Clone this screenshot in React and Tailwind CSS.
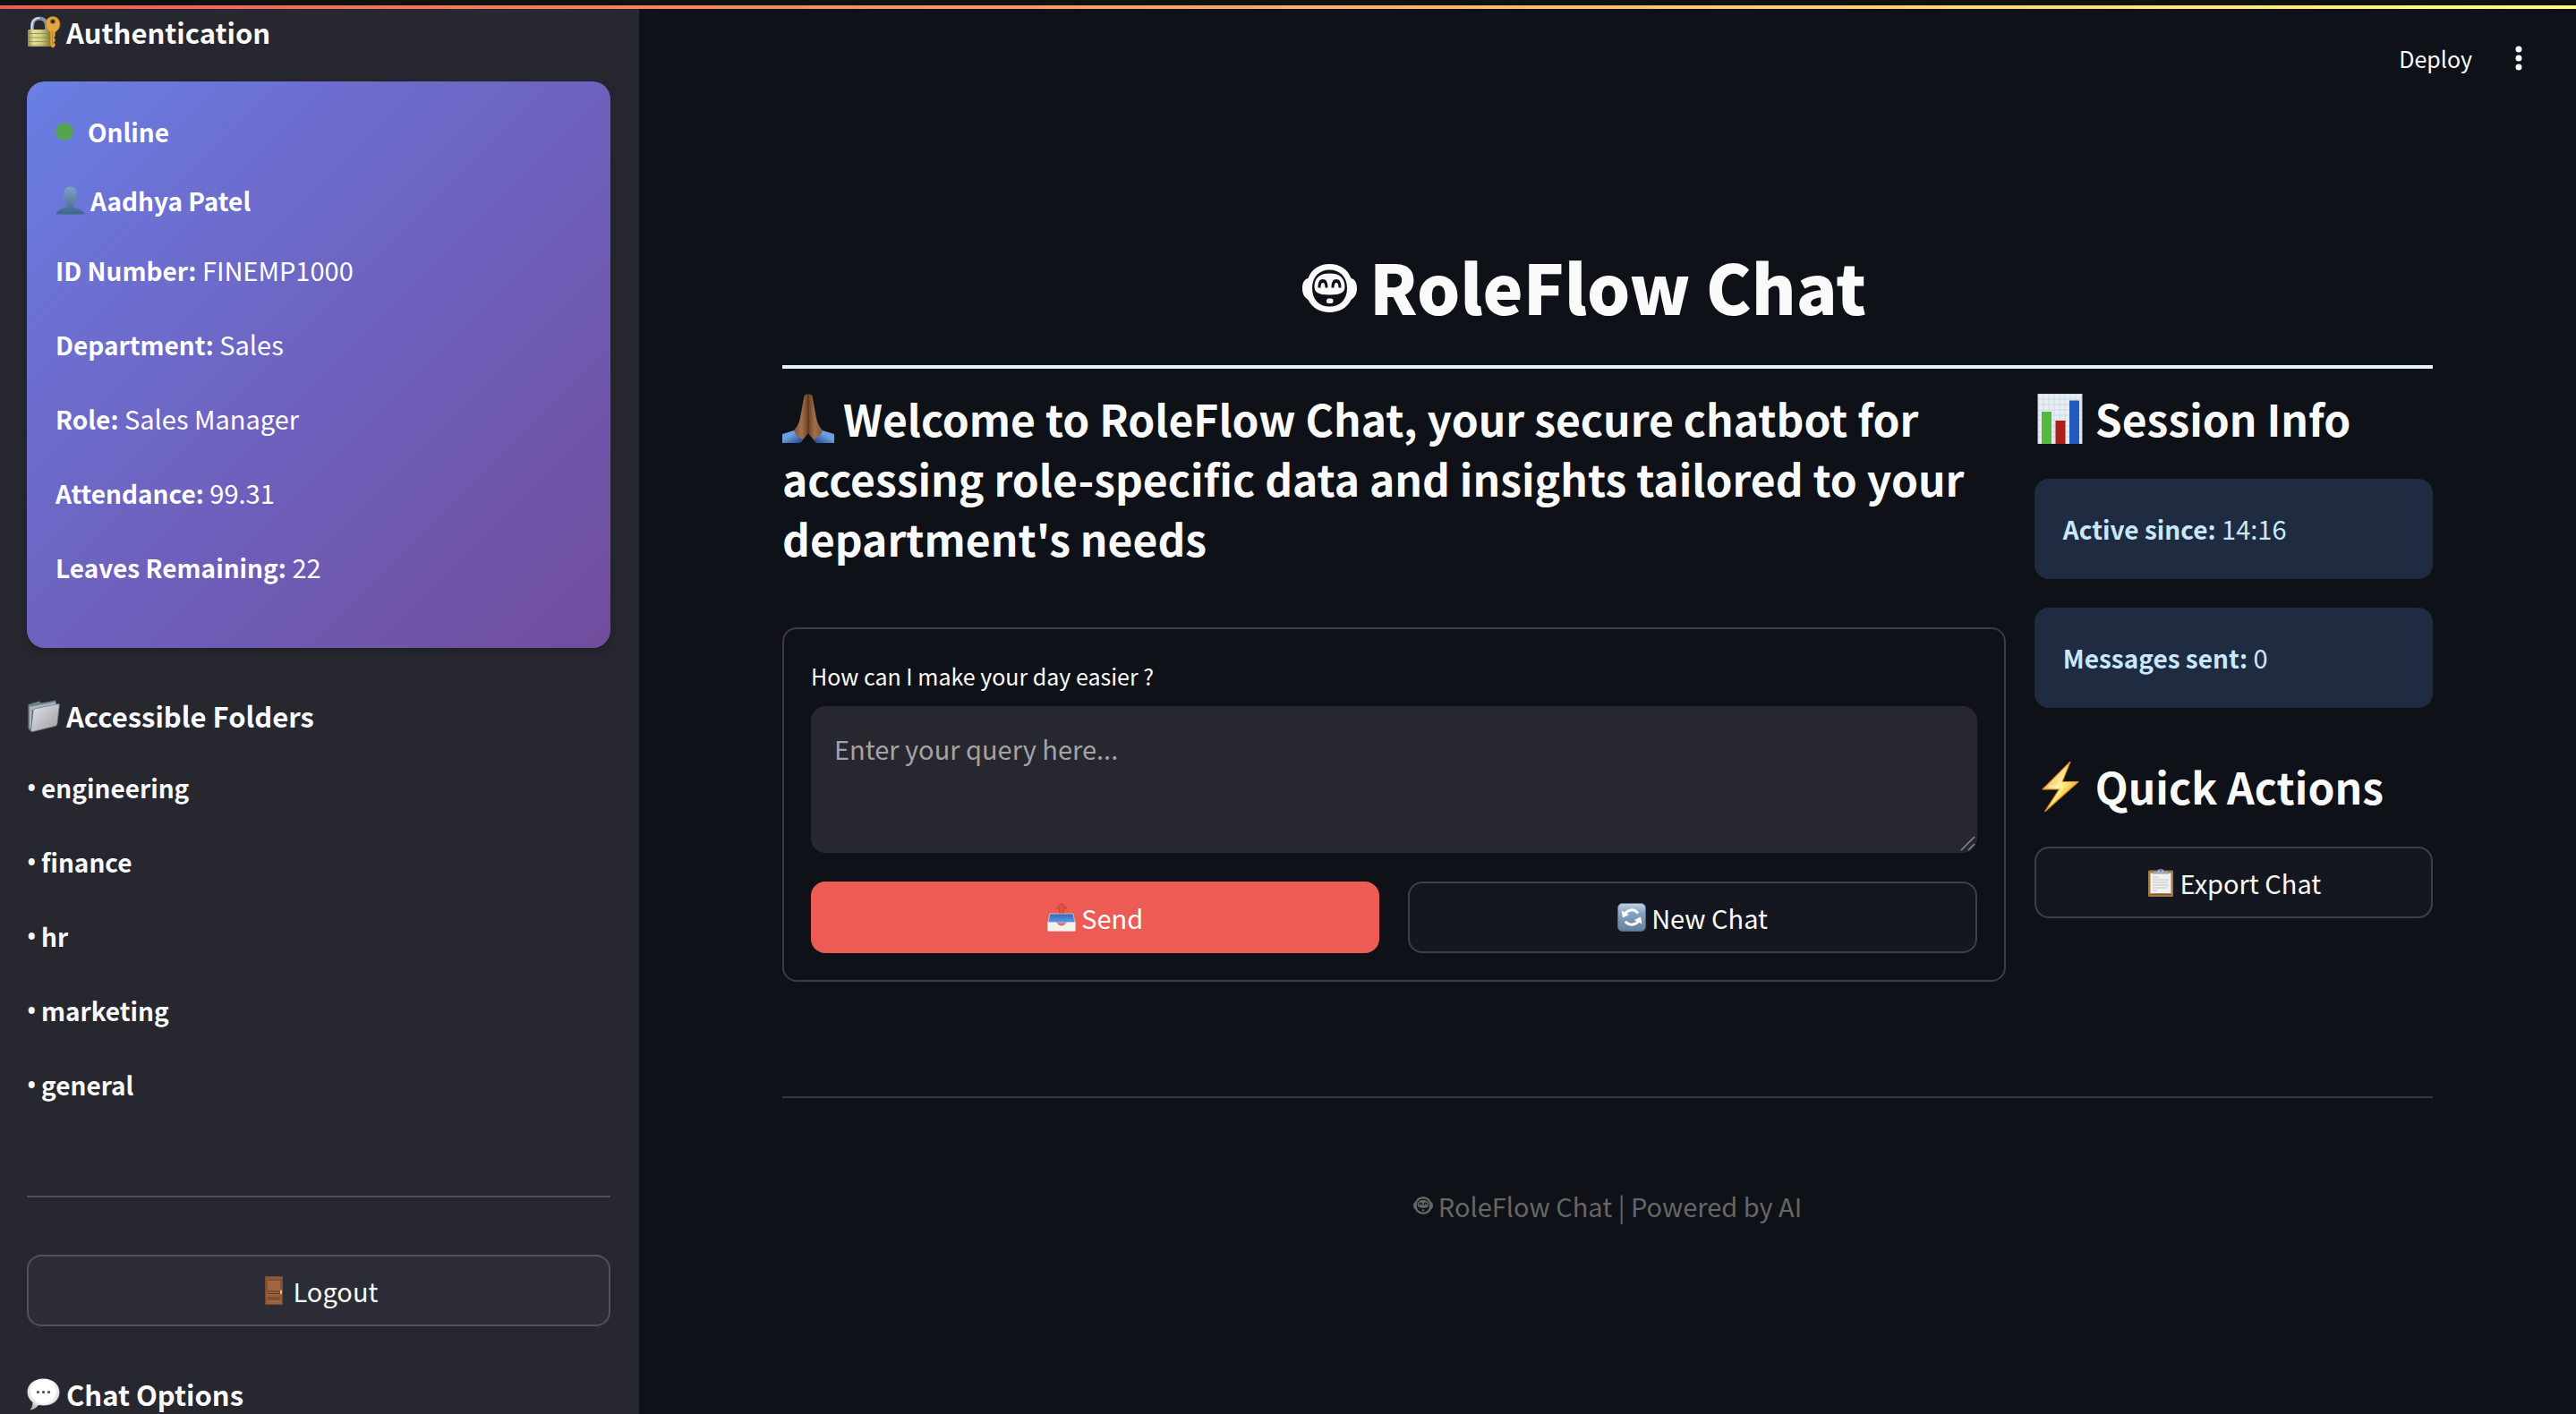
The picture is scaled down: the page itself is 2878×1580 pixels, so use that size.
import React from "react";

/* ---------- icons ---------- */

function RobotFace({ className }) {
  return (
    <svg viewBox="0 0 61 54" className={className} fill="none" aria-hidden="true">
      <path
        fill="currentColor"
        fillRule="evenodd"
        d="M30.500 0C19 0 10 6 6.500 16C2 17 0 21.500 0 27C0 33 2 37 6.500 40C11 49 20 54 30.500 54C41 54 50 49 54.500 40C59 37 61 33 61 27C61 21.500 59 17 54.500 16C51 6 42 0 30.500 0ZM30.500 6.500C42 6.500 50 14.500 50 27C50 40 42 47.500 30.500 47.500C19 47.500 11 40 11 27C11 14.500 19 6.500 30.500 6.500Z"
      />
      <path
        fill="currentColor"
        fillRule="evenodd"
        d="M30.500 10.500C20 10.500 13.500 15 13.500 25.500C13.500 31.500 18 34.500 30.500 34.500C43 34.500 47.500 31.500 47.500 25.500C47.500 15 41 10.500 30.500 10.500ZM17.500 26.500C17.500 20 19.500 17 23 17C26.500 17 28.500 20 28.500 26.500H25.500C25.500 23 24.800 21 23 21C21.200 21 20.500 23 20.500 26.500ZM32.500 26.500C32.500 20 34.500 17 38 17C41.500 17 43.500 20 43.500 26.500H40.500C40.500 23 39.800 21 38 21C36.200 21 35.500 23 35.500 26.500Z"
      />
      <rect x="27" y="38.500" width="7.500" height="5.500" rx="2.500" fill="currentColor" />
    </svg>
  );
}

function LockKey({ className }) {
  return (
    <svg viewBox="0 0 38 36" className={className} aria-hidden="true">
      <defs>
        <linearGradient id="lock-body" x1="0" x2="1" y1="0" y2="0">
          <stop offset="0" stopColor="#8f8a4c" />
          <stop offset="0.25" stopColor="#e6e09a" />
          <stop offset="0.6" stopColor="#cfc77c" />
          <stop offset="1" stopColor="#7d7434" />
        </linearGradient>
      </defs>
      <path d="M6 16V11C6 5 9.500 2.500 14 2.500C18.500 2.500 22 5 22 11V16" fill="none" stroke="#7f92ab" strokeWidth="4" />
      <path d="M5.500 15V11C5.500 5 9.500 2 14 2" fill="none" stroke="#dfe8f3" strokeWidth="1.500" />
      <rect x="1" y="15" width="26" height="19" rx="1" fill="url(#lock-body)" />
      <path d="M1 19.500H27M1 24H27M1 28.500H27M1 33H27" stroke="#8d8545" strokeWidth="0.800" />
      <path
        fill="#e0a63a"
        stroke="#a8751c"
        strokeWidth="0.700"
        fillRule="evenodd"
        d="M29 0.500C24 0.500 21 4.500 21 9C21 13.500 23.500 16 26 18V33L29 35.500L31.500 33.500V31L30 29.500L31.500 28V25.500L30 24L31.500 22.500V18C34.500 16 37 13.500 37 9C37 4.500 34 0.500 29 0.500ZM29 3.500A2.500 2.500 0 1 1 29 8.500A2.500 2.500 0 0 1 29 3.500Z"
      />
      <path d="M28.500 17V32" stroke="#b98220" strokeWidth="1" />
    </svg>
  );
}

function Person({ className }) {
  return (
    <svg viewBox="0 0 34 33" className={className} aria-hidden="true">
      <defs>
        <linearGradient id="person-fill" x1="0" x2="0" y1="0" y2="1">
          <stop offset="0" stopColor="#7fa3c3" />
          <stop offset="1" stopColor="#41658a" />
        </linearGradient>
      </defs>
      <path
        fill="url(#person-fill)"
        d="M17 0.500C12.500 0.500 9.800 3.500 9.800 8C9.800 9.500 9.800 10.500 9 11C8.800 13 9.200 15 10.500 15.500C11.200 18 12.500 19.500 13.500 20.500V23.500C12 26 2 25.500 0.500 32.500H33.500C32 25.500 22 26 20.500 23.500V20.500C21.500 19.500 22.800 18 23.500 15.500C24.800 15 25.200 13 25 11C24.200 10.500 24.200 9.500 24.200 8C24.200 3.500 21.500 0.500 17 0.500Z"
      />
    </svg>
  );
}

function Folder({ className }) {
  return (
    <svg viewBox="0 0 36 35" className={className} aria-hidden="true">
      <defs>
        <linearGradient id="folder-front" x1="0" x2="1" y1="0" y2="1">
          <stop offset="0" stopColor="#e3e5ea" />
          <stop offset="1" stopColor="#9b9da3" />
        </linearGradient>
      </defs>
      <path d="M1 5L13 1.500L15 3.500L31 0.500V4L6 12L3.500 34L1 31Z" fill="#71818c" />
      <path d="M2.500 7.500L31 2.500V6L5 11L4 32L2.500 30Z" fill="#a9b6bd" />
      <path d="M6.500 11.500Q7 10 9 9.500L33 4.500Q35 4.200 34.800 6L32.500 26Q32 28 30.500 28.500L6 34.500Q3.500 35 4 33Z" fill="url(#folder-front)" stroke="#777b82" strokeWidth="0.800" />
    </svg>
  );
}

function Door({ className }) {
  return (
    <svg viewBox="0 0 32 32" className={className} aria-hidden="true">
      <rect x="6" y="0" width="20" height="32" fill="#7b4a32" />
      <rect x="7.500" y="1.500" width="17" height="29.500" fill="#98603f" />
      <path d="M9 4.500H23V16H9ZM9 18.500H23V21H9ZM9 24H23V29H9Z" fill="#a0663f" />
      <path d="M9 4H23M9 17H23M9 19.500H23M9 24H23M9 26H23" stroke="#653821" strokeWidth="1.200" />
      <path d="M8.500 4V16M23.500 4V16" stroke="#7a4a2e" strokeWidth="0.800" />
      <rect x="23" y="15.500" width="2" height="4.500" rx="0.800" fill="#e8c04a" />
    </svg>
  );
}

function Speech({ className }) {
  return (
    <svg viewBox="0 0 38 36" className={className} aria-hidden="true">
      <defs>
        <radialGradient id="speech-fill" cx="0.5" cy="0.4" r="0.6">
          <stop offset="0.6" stopColor="#ffffff" />
          <stop offset="1" stopColor="#b5b5b7" />
        </radialGradient>
      </defs>
      <path fill="url(#speech-fill)" d="M18.500 0.500C29 0.500 36.500 7 36.500 15.500C36.500 24.500 29 30.500 18.500 30.500C16.500 30.500 14.500 30.300 13 30C10.500 33 7 35.500 3.500 35.500C5.500 33.500 6.500 30.500 6.500 27C2.500 24 0.500 20 0.500 15.500C0.500 7 8 0.500 18.500 0.500Z" />
      <g fill="#4a4a4c">
        <circle cx="12.500" cy="15.500" r="1.600" />
        <circle cx="18.500" cy="15.500" r="1.600" />
        <circle cx="24.500" cy="15.500" r="1.600" />
      </g>
    </svg>
  );
}

function Pray({ className }) {
  return (
    <svg viewBox="0 0 58 56" className={className} aria-hidden="true">
      <defs>
        <linearGradient id="hand-left" x1="0" x2="1" y1="0" y2="0">
          <stop offset="0" stopColor="#7d4f2c" />
          <stop offset="0.6" stopColor="#a0704a" />
          <stop offset="1" stopColor="#6b4122" />
        </linearGradient>
        <linearGradient id="hand-right" x1="1" x2="0" y1="0" y2="0">
          <stop offset="0" stopColor="#7d4f2c" />
          <stop offset="0.6" stopColor="#a0704a" />
          <stop offset="1" stopColor="#6b4122" />
        </linearGradient>
        <linearGradient id="sleeve-left" x1="0" x2="1" y1="0" y2="1">
          <stop offset="0.4" stopColor="#6aa0e0" />
          <stop offset="1" stopColor="#1c3c86" />
        </linearGradient>
        <linearGradient id="sleeve-right" x1="1" x2="0" y1="0" y2="1">
          <stop offset="0.4" stopColor="#6aa0e0" />
          <stop offset="1" stopColor="#1c3c86" />
        </linearGradient>
      </defs>
      <path d="M29 0.500C26 0 24.500 1.500 24.200 4L20 27C19 33 16 38 11 43L21 54L29 44Z" fill="url(#hand-left)" />
      <path d="M29 0.500C32 0 33.500 1.500 33.800 4L38 27C39 33 42 38 47 43L37 54L29 44Z" fill="url(#hand-right)" />
      <path d="M29 1V45" stroke="#5c3519" strokeWidth="1" />
      <path d="M0 45L13 41C15 46 18 49 23 50.500L20 55H0Z" fill="url(#sleeve-left)" />
      <path d="M58 45L45 41C43 46 40 49 35 50.500L38 55H58Z" fill="url(#sleeve-right)" />
    </svg>
  );
}

function BarChart({ className }) {
  return (
    <svg viewBox="0 0 58 56" className={className} aria-hidden="true">
      <rect x="4" y="0" width="49" height="56" fill="#e8edf2" stroke="#c3cad3" />
      <path d="M4 6H53M4 12H53M4 18H53M4 24H53M4 30H53M4 36H53M4 42H53M4 48H53M10 0V56M16 0V56M22 0V56M28 0V56M34 0V56M40 0V56M46 0V56" stroke="#c9d6e6" strokeWidth="0.800" />
      <rect x="8" y="20" width="11" height="36" fill="#55b83e" />
      <rect x="23.500" y="30" width="11" height="26" fill="#ad2018" />
      <rect x="39" y="7.500" width="11" height="48.500" fill="#2459bd" />
    </svg>
  );
}

function Bolt({ className }) {
  return (
    <svg viewBox="0 0 58 56" className={className} aria-hidden="true">
      <defs>
        <linearGradient id="bolt-fill" x1="0" x2="1" y1="0" y2="1">
          <stop offset="0.200" stopColor="#f0a030" />
          <stop offset="0.450" stopColor="#fff1a0" />
          <stop offset="0.550" stopColor="#fde66a" />
          <stop offset="0.800" stopColor="#ee9a2c" />
        </linearGradient>
      </defs>
      <path d="M40 0L9 31H27.500L11.500 56L49 22.500H31Z" fill="url(#bolt-fill)" stroke="#e58e26" strokeWidth="1.200" strokeLinejoin="round" />
      <path d="M36 6L16 28H32L20 46" fill="none" stroke="#fff8cf" strokeWidth="1" opacity="0.800" />
    </svg>
  );
}

function Clipboard({ className }) {
  return (
    <svg viewBox="0 0 32 32" className={className} aria-hidden="true">
      <rect x="2" y="2.500" width="28" height="29.500" rx="1.500" fill="#a37b43" />
      <path d="M4.500 5.500H27.500V28.500H4.500Z" fill="#f1f1ef" />
      <path d="M4.500 28.500H27.500V30H4.500Z" fill="#7d5a2b" />
      <path d="M7 10H14M7 13H25M7 16H24M7 19H25M7 22H23M7 25H12" stroke="#c4c4c6" strokeWidth="1" />
      <path d="M7 3.500H12C13 0.500 19 0.500 20 3.500H25V6H7Z" fill="#a8b0bb" stroke="#6f7783" strokeWidth="0.600" />
      <circle cx="16" cy="2.500" r="1.200" fill="#4c78b8" />
    </svg>
  );
}

function Outbox({ className }) {
  return (
    <svg viewBox="0 0 32 32" className={className} aria-hidden="true">
      <defs>
        <linearGradient id="tray-inside" x1="0" x2="0" y1="0" y2="1">
          <stop offset="0" stopColor="#3567b5" />
          <stop offset="1" stopColor="#5a9bea" />
        </linearGradient>
      </defs>
      <path d="M16 0L22 6H18.500V12H13.500V6H10Z" fill="#e0503f" stroke="#b93a30" strokeWidth="0.600" />
      <path d="M3 12H29L31 22H1Z" fill="url(#tray-inside)" stroke="#cfd3d8" strokeWidth="0.800" />
      <path d="M0.500 21.500H9.500C11 21.500 12 25.500 16 25.500C20 25.500 21 21.500 22.500 21.500H31.500V30.500Q31.500 31.500 30.500 31.500H1.500Q0.500 31.500 0.500 30.500Z" fill="#f3f2ee" stroke="#cfcdc8" strokeWidth="0.600" />
    </svg>
  );
}

function Refresh({ className }) {
  return (
    <svg viewBox="0 0 32 32" className={className} aria-hidden="true">
      <defs>
        <linearGradient id="refresh-fill" x1="0" x2="0" y1="0" y2="1">
          <stop offset="0" stopColor="#c3d3e2" />
          <stop offset="0.350" stopColor="#88a2bf" />
          <stop offset="1" stopColor="#64809f" />
        </linearGradient>
      </defs>
      <rect x="0.500" y="0.500" width="31" height="31" rx="5" fill="url(#refresh-fill)" stroke="#56708e" strokeWidth="0.800" />
      <g fill="none" stroke="#fff" strokeWidth="3">
        <path d="M8 13.500A8.500 8.500 0 0 1 23 11.500" />
        <path d="M24 18.500A8.500 8.500 0 0 1 9 20.500" />
      </g>
      <path d="M4.500 8.500L6 16.500L13 13Z" fill="#fff" />
      <path d="M27.500 23.500L26 15.500L19 19Z" fill="#fff" />
    </svg>
  );
}

/* ---------- content ---------- */

const profile = [
  ["ID Number:", "FINEMP1000"],
  ["Department:", "Sales"],
  ["Role:", "Sales Manager"],
  ["Attendance:", "99.31"],
  ["Leaves Remaining:", "22"],
];

const folders = ["engineering", "finance", "hr", "marketing", "general"];

const session = [
  ["Active since:", "14:16"],
  ["Messages sent:", "0"],
];

function SideHeading({ icon: Icon, children }) {
  return (
    <h3 className="flex items-center gap-1.5 text-[31px] leading-[48px] font-semibold">
      <Icon className="h-9 w-[38px] shrink-0" />
      {children}
    </h3>
  );
}

function OutlineButton({ icon: Icon, className, children }) {
  return (
    <button
      type="button"
      className={`flex h-20 w-full items-center justify-center gap-1.5 rounded-2xl border-2 text-[29px] leading-[48px] ${className}`}
    >
      <Icon className="size-8 shrink-0" />
      {children}
    </button>
  );
}

function Sidebar() {
  return (
    <aside className="w-[714px] shrink-0 overflow-hidden bg-[#272730] pt-0.5 pr-8 pl-[30px]">
      <SideHeading icon={LockKey}>Authentication</SideHeading>

      <section className="mt-[31px] rounded-[20px] bg-[linear-gradient(135deg,#6a7fe5_0%,#6c6fd0_25%,#6e5db8_60%,#714d9c_100%)] px-8 pt-8 pb-[67px] text-[29px] leading-[48px] text-white shadow-[0_4px_12px_rgba(0,0,0,0.2)]">
        <p className="flex items-center text-[28px] font-semibold">
          <span className="mr-4 size-5 rounded-full bg-[#54a551]" />
          Online
        </p>
        <p className="mt-[29px] flex items-center gap-1.5 text-[28px] font-semibold">
          <Person className="h-8 w-[33px] shrink-0" />
          Aadhya Patel
        </p>
        <div className="mt-[29px] flex flex-col gap-[35px]">
          {profile.map(([label, value]) => (
            <p key={label}>
              <strong className="text-[28px] leading-10 font-semibold">{label}</strong> {value}
            </p>
          ))}
        </div>
      </section>

      <div className="mt-[52px]">
        <SideHeading icon={Folder}>Accessible Folders</SideHeading>
      </div>
      <ul className="mt-8 flex flex-col gap-[35px] text-[28px] leading-[48px] font-semibold">
        {folders.map((name) => (
          <li key={name} className="flex items-center">
            <span className="w-4 font-['Open_Sans',sans-serif]">•</span>
            {name}
          </li>
        ))}
      </ul>

      <hr className="mt-[100px] mb-16 border-t-2 border-[#4f5059]" />

      <OutlineButton icon={Door} className="border-[#51525b] bg-[#2c2c36]">
        Logout
      </OutlineButton>

      <div className="mt-[52px]">
        <SideHeading icon={Speech}>Chat Options</SideHeading>
      </div>
    </aside>
  );
}

function ChatForm() {
  return (
    <form className="mt-[66px] rounded-2xl border-2 border-[#3c3d42] p-[30px]" onSubmit={(e) => e.preventDefault()}>
      <label htmlFor="query" className="block text-[25px] leading-[44px]">
        How can I make your day easier ?
      </label>
      <div className="relative mt-3">
        <textarea
          id="query"
          placeholder="Enter your query here..."
          className="block h-[164px] w-full resize-none rounded-2xl bg-[#272730] px-[26px] pt-6 text-[29px] leading-[46px] outline-none placeholder:text-[#a3a3a6]"
        />
        <svg viewBox="0 0 18 18" className="absolute right-0.5 bottom-0.5 size-[18px]" aria-hidden="true">
          <path d="M2 17L17 2M10 17L17 10" stroke="#8b8b90" strokeWidth="1.500" />
        </svg>
      </div>
      <div className="mt-8 grid grid-cols-2 gap-8">
        <button
          type="submit"
          className="flex h-20 items-center justify-center gap-1.5 rounded-2xl bg-[#ec5c54] text-[29px] leading-[48px] text-white"
        >
          <Outbox className="size-8 shrink-0" />
          Send
        </button>
        <OutlineButton icon={Refresh} className="border-[#3f4047] bg-[#14171f]">
          New Chat
        </OutlineButton>
      </div>
    </form>
  );
}

function SessionPanel() {
  return (
    <div>
      <h2 className="flex items-center gap-2.5 text-[48px] leading-[67px] font-semibold">
        <BarChart className="h-14 w-[58px] shrink-0" />
        Session Info
      </h2>
      <div className="mt-[34px] flex flex-col gap-8">
        {session.map(([label, value]) => (
          <p key={label} className="rounded-2xl bg-[#1e2b41] px-8 pt-[31px] pb-[33px] text-[29px] leading-[48px] text-[#c9e8fd]">
            <strong className="text-[28px] leading-10 font-semibold">{label}</strong> {value}
          </p>
        ))}
      </div>
      <h2 className="mt-[54px] mb-[34px] flex items-center gap-2.5 text-[48px] leading-[67px] font-semibold">
        <Bolt className="h-14 w-[58px] shrink-0" />
        Quick Actions
      </h2>
      <OutlineButton icon={Clipboard} className="border-[#3f4047] bg-[#14171f]">
        Export Chat
      </OutlineButton>
    </div>
  );
}

export default function App() {
  return (
    <div className="flex h-screen flex-col overflow-hidden bg-[#0e1117] font-['Noto_Sans_CJK_SC','Noto_Sans',sans-serif] text-[#fafafa]">
      <div className="h-1.5 shrink-0 bg-[#111111]" />
      <div className="h-1 shrink-0 bg-[linear-gradient(90deg,#ec5c54,#fffd8a)]" />
      <div className="flex min-h-0 flex-1">
        <Sidebar />
        <main className="min-w-0 flex-1">
          <header className="flex h-[110px] items-center justify-end gap-9 pr-12">
            <button type="button" className="text-[25px] leading-[48px]">
              Deploy
            </button>
            <button type="button" aria-label="Menu" className="size-8">
              <svg viewBox="0 0 32 32" className="size-8" fill="currentColor" aria-hidden="true">
                <circle cx="16" cy="6" r="3.500" />
                <circle cx="16" cy="16" r="3.500" />
                <circle cx="16" cy="26" r="3.500" />
              </svg>
            </button>
          </header>

          <div className="px-40 pt-[146px]">
            <h1 className="flex items-center justify-center gap-3.5 pr-[52px] text-[76px] leading-[106px] font-black">
              <RobotFace className="mt-1.5 h-[54px] w-[61px] shrink-0" />
              RoleFlow Chat
            </h1>
            <hr className="mt-9 border-t-4 border-[#e3f2fd]" />

            <div className="mt-[22px] grid grid-cols-[3.07fr_1fr] items-start gap-8">
              <div>
                <h2 className="text-[48px] leading-[67px] font-semibold">
                  <Pray className="mr-2.5 inline-block h-14 w-[58px] align-[-8px]" />
                  Welcome to RoleFlow Chat, your secure chatbot for accessing role-specific data and insights tailored
                  to your department's needs
                </h2>
                <ChatForm />
              </div>
              <SessionPanel />
            </div>

            <hr className="mt-32 border-t-2 border-[#36383e]" />
            <footer className="mt-24 flex items-center justify-center gap-1.5 text-[29px] leading-[48px] text-[#666666]">
              <RobotFace className="h-5 w-[22px] shrink-0" />
              RoleFlow Chat | Powered by AI
            </footer>
          </div>
        </main>
      </div>
    </div>
  );
}
